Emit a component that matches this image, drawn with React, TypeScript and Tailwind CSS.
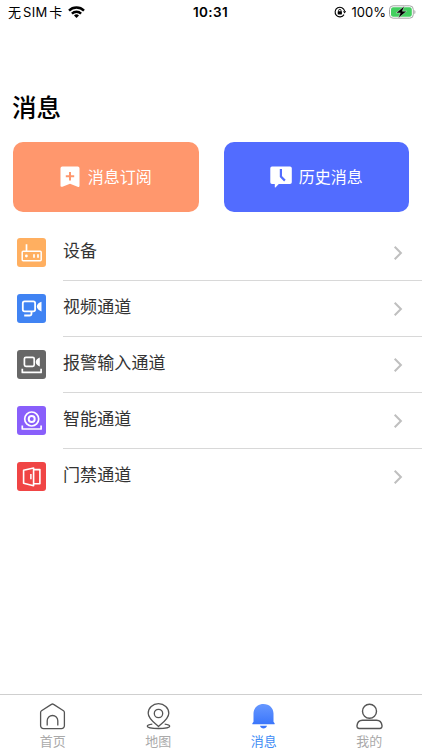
import React from 'react';

type IconProps = { className?: string };

function WifiIcon() {
    return (
        <svg viewBox="0 0 17 12" className="w-[17px] h-3" fill="none" stroke="#000" strokeWidth="2.4">
            <path d="M1 4.6a10.6 10.6 0 0 1 15 0" />
            <path d="M3.9 7.6a6.5 6.5 0 0 1 9.2 0" />
            <path d="M8.5 12 6 9.5a3.5 3.5 0 0 1 5 0z" fill="#000" stroke="none" />
        </svg>
    );
}

function RotationLockIcon() {
    return (
        <svg viewBox="0 0 12 12" className="w-3 h-3" fill="none" stroke="#000" strokeWidth="1.1">
            <path d="M10 8.6A4.8 4.8 0 1 1 10.6 5" />
            <path d="M9 5.2h3.2l-1.6 2.3z" fill="#000" stroke="none" />
            <rect x="3.7" y="5.2" width="4.2" height="3.2" rx=".4" fill="#000" stroke="none" />
            <path d="M4.6 5.6v-1a1.2 1.2 0 0 1 2.4 0v1" strokeWidth=".9" />
        </svg>
    );
}

function BatteryIcon() {
    return (
        <svg viewBox="0 0 27 14" className="w-[27px] h-[14px]">
            <rect x=".5" y=".8" width="23.8" height="12.4" rx="3.6" fill="#fff" stroke="#a5a5a5" />
            <rect x="2" y="2.3" width="20.8" height="9.4" rx="2.2" fill="#43cf60" />
            <path d="M25.4 4.9c1.4.6 1.4 3.600 0 4.200z" fill="#a5a5a5" />
            <path d="M15.400 1 7 7.900h4.300L9.200 13.200l8.500-7h-4.300z" fill="#000" stroke="#fff" strokeWidth=".4" />
        </svg>
    );
}

function SubscribeIcon() {
    return (
        <svg viewBox="0 0 20 22" className="w-5 h-[22px]">
            <path d="M2.3.5h15.4a1.8 1.8 0 0 1 1.8 1.8v17.4c0 1.1-.9 1.5-1.9 1L10 17.8l-7.6 2.9c-1 .4-1.9 0-1.9-1V2.3A1.8 1.8 0 0 1 2.3.5z" fill="#fff" />
            <path d="M10 6v8.4M5.8 10.2h8.4" stroke="#ff976d" strokeWidth="2" fill="none" />
        </svg>
    );
}

function HistoryIcon() {
    return (
        <svg viewBox="0 0 22 22" className="w-[22px] h-[22px]">
            <path d="M2 .5h18a1.8 1.8 0 0 1 1.8 1.8v14a1.8 1.8 0 0 1-1.8 1.8H8.8l-3.1 3.2c-.4.4-.9.3-.9-.3v-2.9H2a1.8 1.8 0 0 1-1.7-1.8v-14A1.8 1.8 0 0 1 2 .5z" fill="#fff" />
            <path d="M10.9 3v7.6l4 4" stroke="#526cff" strokeWidth="2.2" fill="none" />
        </svg>
    );
}

const lineProps = {
    viewBox: '0 0 29 29',
    fill: 'none',
    stroke: '#fff',
    strokeWidth: 1.5,
    strokeLinejoin: 'round' as const,
};

function DeviceIcon({ className }: IconProps) {
    return (
        <svg {...lineProps} className={className}>
            <rect x="5.2" y="13.2" width="19" height="9.6" rx="1" />
            <path d="M9.5 6.3v7M17 16.2v3.6M21 16.2v3.6" strokeWidth="1.7" />
            <circle cx="9.4" cy="18" r="1.4" fill="#fff" stroke="none" />
        </svg>
    );
}

function VideoIcon({ className }: IconProps) {
    return (
        <svg {...lineProps} strokeWidth={1.8} className={className}>
            <rect x="5.8" y="7.3" width="12.3" height="10" rx="1.8" />
            <path d="M14.5 17.3v2.1c0 1.4-.7 2.1-2.1 2.1H7.2" />
            <path d="M24.5 7.8v9.6c-2.4-.8-4.7-2.5-4.7-4.8s2.3-4 4.7-4.8z" fill="#fff" stroke="none" />
        </svg>
    );
}

function AlarmInputIcon({ className }: IconProps) {
    return (
        <svg {...lineProps} strokeWidth={1.7} className={className}>
            <rect x="7.4" y="7.3" width="9.8" height="9" rx="1.5" />
            <path d="M22.8 7.4v9c-2.1-.7-4.1-2.2-4.1-4.5s2-3.8 4.1-4.5z" fill="#fff" stroke="none" />
            <path d="M5.3 18.8v3.6h18.8v-3.6" />
        </svg>
    );
}

function SmartIcon({ className }: IconProps) {
    return (
        <svg {...lineProps} strokeWidth={1.7} className={className}>
            <circle cx="14.7" cy="13" r="7" />
            <circle cx="14.7" cy="13" r="3" strokeWidth="2" />
            <path d="M5.3 19.6V23h18.8v-3.4" />
        </svg>
    );
}

function DoorIcon({ className }: IconProps) {
    return (
        <svg {...lineProps} className={className}>
            <path d="m6.6 8.2 10-2.2v17.8l-10-2.5z" strokeWidth="1.6" />
            <path d="M16.6 7.6h6.3v14.2h-6.3" strokeWidth="1.6" />
            <path d="M13.9 12v5.2" />
        </svg>
    );
}

function ChevronIcon() {
    return (
        <svg viewBox="0 0 10 16" className="w-2.5 h-4" fill="none" stroke="#bfbfbf" strokeWidth="2">
            <path d="m1.7 1.8 6.2 6.2-6.2 6.2" />
        </svg>
    );
}

function HomeIcon() {
    return (
        <svg viewBox="0 0 27 27" className="w-[27px] h-[27px]" fill="none" stroke="#555" strokeWidth="1.3" strokeLinejoin="round">
            <path d="M1.6 9.4c0-.7.3-1.2.9-1.6l9.9-6.4c.7-.5 1.5-.5 2.2 0l9.9 6.4c.6.4.9.9.9 1.6v13.3a2.9 2.9 0 0 1-2.9 2.9H4.500a2.9 2.9 0 0 1-2.9-2.9z" />
            <path d="M8.2 22.5v-4.700a5.300 5.300 0 0 1 10.600 0v4.700" />
        </svg>
    );
}

function MapIcon() {
    return (
        <svg viewBox="0 0 27 27" className="w-[27px] h-[27px]" fill="none" stroke="#555" strokeWidth="1.3">
            <path d="M13.5 23.5C9.2 19.6 3.2 15.8 3.2 10.3a10.3 9.6 0 0 1 20.6 0c0 5.5-6 9.3-10.3 13.2z" />
            <circle cx="13.5" cy="10.5" r="4.2" />
            <path d="M7.3 21.2c-3.3.5-5 1.2-5 2 0 1.3 5 2.3 11.2 2.3s11.2-1 11.2-2.3c0-.8-1.7-1.5-5-2" />
        </svg>
    );
}

function BellIcon() {
    return (
        <svg viewBox="0 0 27 27" className="w-[27px] h-[27px]">
            <defs>
                <linearGradient id="bell" x1="0" y1="0" x2="0" y2="1">
                    <stop offset="0" stopColor="#6798ff" />
                    <stop offset="1" stopColor="#3b76fb" />
                </linearGradient>
            </defs>
            <path d="M13.5.9c5.9 0 10 4.1 10 9.7v8.2l1.1 1.5c.3.6 0 1-.6 1H3c-.6 0-.9-.4-.6-1l1.100-1.500v-8.200C3.500 5 7.600.9 13.500.9z" fill="url(#bell)" />
            <path d="M10 22.8h7c-.5 1.8-1.9 2.8-3.5 2.8s-3-1-3.5-2.8z" fill="#3b76fb" />
        </svg>
    );
}

function ProfileIcon() {
    return (
        <svg viewBox="0 0 27 27" className="w-[27px] h-[27px]" fill="none" stroke="#555" strokeWidth="1.4">
            <circle cx="13.5" cy="8.3" r="7" />
            <path d="M6.5 17.2h14c3 0 5.2 2.3 5.5 5.4.2 1.9-.8 2.9-2.3 2.9H3.3c-1.5 0-2.5-1-2.3-2.9.3-3.1 2.5-5.4 5.5-5.4z" />
        </svg>
    );
}

const channels = [
    { label: '设备', icon: DeviceIcon, color: 'bg-[#ffaf60]' },
    { label: '视频通道', icon: VideoIcon, color: 'bg-[#4083f3]' },
    { label: '报警输入通道', icon: AlarmInputIcon, color: 'bg-[#676767]' },
    { label: '智能通道', icon: SmartIcon, color: 'bg-[#895ffb]' },
    { label: '门禁通道', icon: DoorIcon, color: 'bg-[#f04545]' },
];

const tabs = [
    { label: '首页', icon: HomeIcon },
    { label: '地图', icon: MapIcon },
    { label: '消息', icon: BellIcon, active: true },
    { label: '我的', icon: ProfileIcon },
];

export default function App() {
    return (
        <div className="h-[750px] w-full bg-white flex flex-col overflow-hidden font-['Inter','Noto_Sans_CJK_SC',sans-serif]">
            {/* Status bar */}
            <div className="h-6 grid grid-cols-[1fr_auto_1fr] items-center pl-2 pr-[6px] text-black">
                <div className="flex items-center gap-[5px]">
                    <span className="text-[13px] leading-6 tracking-[0.4px] whitespace-nowrap">
                        无<span className="mx-[1.500px]">SIM</span>卡
                    </span>
                    <WifiIcon />
                </div>
                <span className="text-[13.5px] leading-6 font-semibold tracking-[0.4px] mr-[3px]">10:31</span>
                <div className="flex items-center justify-end">
                    <RotationLockIcon />
                    <span className="text-[13px] leading-6 ml-[6px] mr-[3px]">100%</span>
                    <BatteryIcon />
                </div>
            </div>

            <h1 className="mt-[65px] ml-3 h-[37px] leading-[38px] text-[24.5px] font-medium text-black">消息</h1>

            {/* Quick actions */}
            <div className="mt-4 px-[13px] grid grid-cols-2 gap-[25px]">
                <button className="h-[70px] rounded-[10px] bg-[#ff976d] flex items-center justify-center text-white">
                    <SubscribeIcon />
                    <span className="ml-2 text-base">消息订阅</span>
                </button>
                <button className="h-[70px] rounded-[10px] bg-[#526cff] flex items-center justify-center text-white">
                    <HistoryIcon />
                    <span className="ml-[7px] text-base">历史消息</span>
                </button>
            </div>

            {/* Channels */}
            <ul className="mt-[13px] flex-1">
                {channels.map(({ label, icon: Icon, color }, i) => (
                    <li key={label} className="h-14 pl-[17px] flex items-center">
                        <div className={`mb-px w-[29px] h-[29px] rounded-[3px] ${color}`}>
                            <Icon className="w-[29px] h-[29px]" />
                        </div>
                        <div
                            className={`ml-[17px] h-14 flex-1 pr-[19px] flex items-center justify-between border-b ${i < channels.length - 1 ? 'border-[#d8d8d8]' : 'border-transparent'}`}
                        >
                            <span className="pb-[2px] text-[17px] tracking-[0.1px] text-[#333]">{label}</span>
                            <ChevronIcon />
                        </div>
                    </li>
                ))}
            </ul>

            {/* Tab bar */}
            <nav className="h-14 border-t border-[#cfcfcf] grid grid-cols-4">
                {tabs.map(({ label, icon: Icon, active }) => (
                    <div key={label} className="flex flex-col items-center pt-2">
                        <Icon />
                        <span className={`mt-[2px] text-[13px] leading-[18px] ${active ? 'text-[#418cf5]' : 'text-[#aaa]'}`}>
                            {label}
                        </span>
                    </div>
                ))}
            </nav>
        </div>
    );
}
